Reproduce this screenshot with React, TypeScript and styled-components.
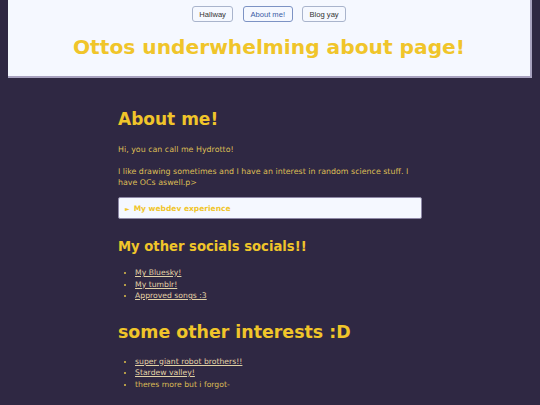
import React from "react";
import styled, { createGlobalStyle } from "styled-components";

const Global = createGlobalStyle`
  html, body { margin: 0; padding: 0; }
  body {
    background: #2f2843;
    font-family: "DejaVu Sans", Verdana, sans-serif;
    color: #dcbd55;
  }
`;

const Page = styled.div`
  padding: 0 8px 20px;
`;

const Header = styled.header`
  box-sizing: border-box;
  height: 78px;
  background: #f5f8ff;
  border-right: 2px solid #a8a2bf;
  border-bottom: 2px solid #a8a2bf;
  padding-top: 6px;
  display: flex;
  flex-direction: column;
  align-items: center;
`;

const Nav = styled.nav`
  display: flex;
  gap: 9.5px;
`;

const NavButton = styled.button<{ $active?: boolean }>`
  font-family: "Liberation Sans", Arial, sans-serif;
  font-size: 7.6px;
  height: 16px;
  padding: 0 6.5px;
  background: #f5f8ff;
  color: ${(p) => (p.$active ? "#3b5ca6" : "#333")};
  border: 1px solid ${(p) => (p.$active ? "#7d93c4" : "#a9b4cc")};
  border-radius: 3px;
`;

const Title = styled.h1`
  margin: 13px 0 0;
  font-size: 20.2px;
  line-height: 24px;
  font-weight: bold;
  color: #f0c52a;
`;

const Main = styled.main`
  width: 304px;
  margin: 0 auto;
  padding-top: 31px;
  display: flex;
  flex-direction: column;
`;

const Heading = styled.h2<{ $size: number; $top?: number }>`
  margin: ${(p) => p.$top ?? 0}px 0 0;
  font-size: ${(p) => p.$size}px;
  line-height: ${(p) => Math.round(p.$size * 1.18)}px;
  font-weight: bold;
  color: #f0c52a;
`;

const P = styled.p<{ $top: number }>`
  margin: ${(p) => p.$top}px 0 0;
  font-size: 7.9px;
  line-height: 11px;
`;

const Details = styled.details`
  margin-top: 9.5px;
  box-sizing: border-box;
  height: 22px;
  background: #f5f8ff;
  border: 1px solid #8e88a6;
  border-radius: 2px;
`;

const Summary = styled.summary`
  list-style: none;
  padding: 0 6px;
  height: 20px;
  display: flex;
  align-items: center;
  gap: 4px;
  font-size: 7.5px;
  font-weight: bold;
  color: #f0c52a;
  &::-webkit-details-marker { display: none; }
`;

const Arrow = styled.span`
  font-size: 6px;
`;

const List = styled.ul<{ $top: number }>`
  margin: ${(p) => p.$top}px 0 0;
  padding-left: 17px;
  font-size: 7.7px;
  line-height: 11.5px;
  li::marker { color: #e0c04a; }
`;

const Link = styled.a`
  color: #e2d2a5;
  text-decoration: underline;
`;

export default function App() {
  return (
    <>
      <Global />
      <Page>
        <Header>
          <Nav>
            <NavButton>Hallway</NavButton>
            <NavButton $active>About me!</NavButton>
            <NavButton>Blog yay</NavButton>
          </Nav>
          <Title>Ottos underwhelming about page!</Title>
        </Header>
        <Main>
          <Heading $size={17}>About me!</Heading>
          <P $top={14.5}>Hi, you can call me Hydrotto!</P>
          <P $top={11}>
            I like drawing sometimes and I have an interest in random science stuff. I have OCs aswell.p&gt;
          </P>
          <Details>
            <Summary><Arrow>►</Arrow>My webdev experience</Summary>
          </Details>
          <Heading $size={13.2} $top={20}>My other socials socials!!</Heading>
          <List $top={12}>
            <li><Link href="#">My Bluesky!</Link></li>
            <li><Link href="#">My tumblr!</Link></li>
            <li><Link href="#">Approved songs :3</Link></li>
          </List>
          <Heading $size={17.4} $top={20}>some other interests :D</Heading>
          <List $top={13}>
            <li><Link href="#">super giant robot brothers!!</Link></li>
            <li><Link href="#">Stardew valley!</Link></li>
            <li>theres more but i forgot-</li>
          </List>
        </Main>
      </Page>
    </>
  );
}
